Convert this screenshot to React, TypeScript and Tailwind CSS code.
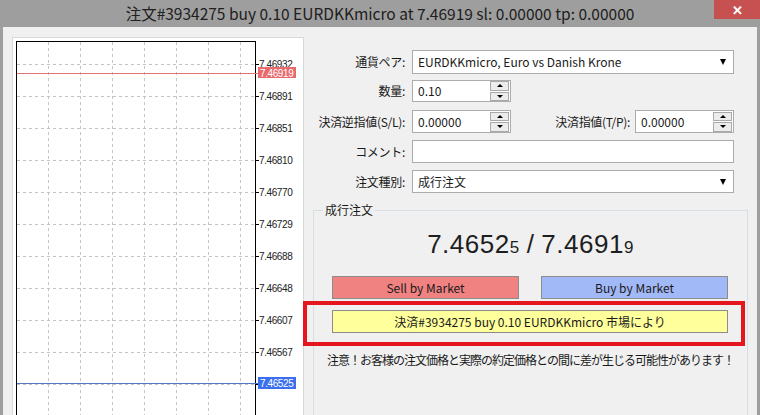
import React from 'react'

const gridY = [64, 96, 128, 160, 192, 224, 256, 288, 320, 352, 384]
const gridX = [48, 80, 112, 144, 176, 208, 240]
const prices = ['7.46932', '7.46891', '7.46851', '7.46810', '7.46770', '7.46729', '7.46688', '7.46648', '7.46607', '7.46567', '']

// chart drawn in page coordinates shifted by the panel origin (12, 37)
function Chart() {
  const ox = 12
  const oy = 37
  return (
    <div className="h-[378px] w-[292px] border-l border-t border-r border-[#d9d9d9] bg-white">
      <svg width="290" height="378" className="block" style={{ marginLeft: -1, marginTop: -1 }}>
        <rect x={16 - ox + 0.5} y={41 - oy + 0.5} width={239} height={400} fill="white" stroke="black" strokeWidth="1" />
        {gridX.map((x) => (
          <line key={x} x1={x - ox + 0.5} y1={42 - oy} x2={x - ox + 0.5} y2={378} stroke="#c4c4c4" strokeDasharray="3 3" />
        ))}
        {gridY.map((y) => (
          <line key={y} x1={17 - ox} y1={y - oy + 0.5} x2={255 - ox} y2={y - oy + 0.5} stroke="#c4c4c4" strokeDasharray="3 3" />
        ))}
        {gridY.map((y) => (
          <rect key={'t' + y} x={255 - ox} y={y - oy} width={4} height={1} fill="black" />
        ))}
        {gridY.map((y, i) =>
          prices[i] ? (
            <text key={'l' + y} x={259 - ox} y={y - oy + 4} fontSize="10" letterSpacing="-0.4" fill="#222" fontFamily="'Liberation Sans', sans-serif">
              {prices[i]}
            </text>
          ) : null
        )}
        {/* ask line */}
        <rect x={17 - ox} y={73 - oy} width={241} height={1} fill="#e07272" />
        <rect x={258 - ox} y={67 - oy} width={38} height={11} fill="#e96a6c" />
        <text x={260 - ox} y={76.5 - oy} fontSize="10" letterSpacing="-0.4" fill="white" fontFamily="'Liberation Sans', sans-serif">
          7.46919
        </text>
        {/* bid line */}
        <rect x={17 - ox} y={383 - oy} width={241} height={1} fill="#5577c4" />
        <rect x={258 - ox} y={377 - oy} width={38} height={12} fill="#3c6ff0" />
        <text x={260 - ox} y={387 - oy} fontSize="10" letterSpacing="-0.4" fill="white" fontFamily="'Liberation Sans', sans-serif">
          7.46525
        </text>
      </svg>
    </div>
  )
}

function Spin() {
  return (
    <div className="mr-[1px] flex h-[20px] w-[19px] flex-col gap-[1px]">
      <div className="flex flex-1 items-center justify-center border border-[#a9a9a9] bg-[#ececec]">
        <div className="h-0 w-0 border-x-[3px] border-b-[3px] border-x-transparent border-b-black" />
      </div>
      <div className="flex flex-1 items-center justify-center border border-[#a9a9a9] bg-[#ececec]">
        <div className="h-0 w-0 border-x-[3px] border-t-[3px] border-x-transparent border-t-black" />
      </div>
    </div>
  )
}

function SpinField({ value, h = 'h-[22px]' }: { value: string; h?: string }) {
  return (
    <div className={`flex w-[99px] items-center border border-[#acacac] bg-white pl-[5px] ${h}`}>
      <span className="flex-1 leading-none">{value}</span>
      <Spin />
    </div>
  )
}

function Select({ value, h = 'h-[23px]' }: { value: string; h?: string }) {
  return (
    <div className={`flex flex-1 items-center border border-[#acacac] bg-white pl-[5px] pr-[7px] ${h}`}>
      <span className="flex-1 leading-none">{value}</span>
      <div className="h-0 w-0 border-x-[3px] border-t-[6px] border-x-transparent border-t-black" />
    </div>
  )
}

function Label({ children }: { children: React.ReactNode }) {
  return <div className="w-[108px] pr-[7px] text-right leading-none tracking-[-0.3px]">{children}</div>
}

export default function App() {
  return (
    <div className="flex h-[415px] w-[760px] flex-col overflow-hidden bg-[#9e9e9e] font-['Noto_Sans_CJK_JP',sans-serif] text-[12px] text-[#1a1a1a]">
      {/* title bar */}
      <div className="relative flex h-[27px] shrink-0 items-center justify-center">
        <span className="text-[15.5px] leading-none text-[#202020]">注文#3934275 buy 0.10 EURDKKmicro at 7.46919 sl: 0.00000 tp: 0.00000</span>
        <div className="absolute right-0 top-0 flex h-[19px] w-[46px] items-center justify-center bg-[#c75050] text-[13px] font-bold leading-none text-white">
          ✕
        </div>
      </div>

      <div className="mx-[3px] flex flex-1 bg-[#f0f0f0]">
        <div className="ml-[9px] mt-[10px]">
          <Chart />
        </div>

        <div className="flex flex-1 flex-col pt-[23px]">
          <div className="flex items-center pr-[23px]">
            <Label>通貨ペア:</Label>
            <Select value="EURDKKmicro, Euro vs Danish Krone" h="h-[24px]" />
          </div>

          <div className="mt-[6px] flex items-center">
            <Label>数量:</Label>
            <SpinField value="0.10" />
          </div>

          <div className="mt-[8px] flex items-center pr-[23px]">
            <Label>決済逆指値(S/L):</Label>
            <SpinField value="0.00000" h="h-[23px]" />
            <div className="flex-1 pr-[5px] text-right leading-none tracking-[-0.3px]">決済指値(T/P):</div>
            <SpinField value="0.00000" h="h-[23px]" />
          </div>

          <div className="mt-[7px] flex items-center pr-[23px]">
            <Label>コメント:</Label>
            <div className="h-[23px] flex-1 border border-[#acacac] bg-white" />
          </div>

          <div className="mt-[7px] flex items-center pr-[23px]">
            <Label>注文種別:</Label>
            <Select value="成行注文" />
          </div>

          {/* market order group */}
          <div className="relative ml-[9px] mr-[9px] mt-[17px] flex-1 border border-b-0 border-[#d5dfe5]">
            <div className="absolute -top-[9px] left-[9px] bg-[#f0f0f0] px-[2px] leading-[16px]">成行注文</div>

            <div className="mt-[18px] flex items-baseline justify-center font-['Liberation_Sans',sans-serif] text-[26px] leading-[30px] tracking-[0.5px] text-[#1e1e1e]">
              <span>7.4652</span>
              <span className="text-[17px]">5</span>
              <span className="px-[7px]">/</span>
              <span>7.4691</span>
              <span className="text-[17px]">9</span>
            </div>

            <div className="mt-[13px] flex gap-[22px] pl-[18px] pr-[19px]">
              <div className="flex h-[23px] flex-1 items-center justify-center border border-[#8c8c8c] bg-[#f08282] leading-none">Sell by Market</div>
              <div className="flex h-[23px] flex-1 items-center justify-center border border-[#8c8c8c] bg-[#a2b9f7] leading-none">Buy by Market</div>
            </div>

            <div className="relative mt-[11px] pl-[18px] pr-[19px]">
              <div className="flex h-[23px] items-center justify-center border border-[#8c8c8c] bg-[#ffff9c] leading-none">
                決済#3934275 buy 0.10 EURDKKmicro 市場により
              </div>
              <div className="absolute -left-[11px] -top-[9px] h-[45px] w-[442px] border-4 border-[#e5161d]" />
            </div>

            <div className="mt-[21px] text-center leading-none tracking-[-1px]">
              注意！お客様の注文価格と実際の約定価格との間に差が生じる可能性があります！
            </div>
          </div>
        </div>
      </div>
    </div>
  )
}
